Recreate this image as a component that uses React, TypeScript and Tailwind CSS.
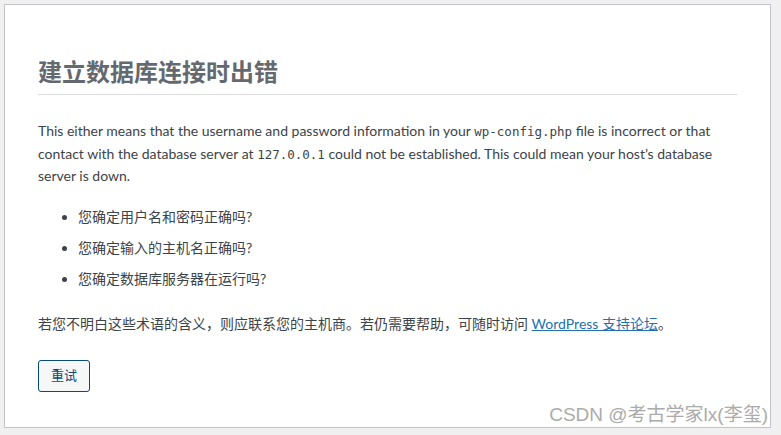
import React from 'react';

const sans = 'Lato, "Noto Sans CJK SC", sans-serif';
const mono = '"DejaVu Sans Mono", "Liberation Mono", monospace';

const checks = ['您确定用户名和密码正确吗?', '您确定输入的主机名正确吗?', '您确定数据库服务器在运行吗?'];

const App = () => {
  return (
    <div
      className="relative h-[435px] w-[781px] overflow-hidden bg-[#f0f0f1] pl-1 pt-1"
      style={{ fontFamily: sans }}
    >
      <div className="h-[424px] w-[767px] border border-[#c3c4c7] bg-white px-[33px] text-[14px] leading-[22.5px] text-[#3c434a]">
        <h1 className="mt-[51px] border-b border-[#dcdcde] pb-[6px] text-[24px] font-bold leading-[32px] text-[#646970]">
          建立数据库连接时出错
        </h1>
        <p className="mt-[25px]">
          This either means that the username and password information in your{' '}
          <code className="text-[12.5px] leading-[0]" style={{ fontFamily: mono }}>
            wp-config.php
          </code>{' '}
          file is incorrect or that contact with the database server at{' '}
          <code className="text-[12.5px] leading-[0]" style={{ fontFamily: mono }}>
            127.0.0.1
          </code>{' '}
          could not be established. This could mean your host’s database server is down.
        </p>
        <ul className="mt-[18px] list-disc pl-10">
          {checks.map(item => (
            <li key={item} className="mb-[8.5px]">
              {item}
            </li>
          ))}
        </ul>
        <p className="mt-[23px]">
          若您不明白这些术语的含义，则应联系您的主机商。若仍需要帮助，可随时访问{' '}
          <a href="#" className="text-[#2271b1] underline">
            WordPress 支持论坛
          </a>
          。
        </p>
        <button className="mt-[24px] h-8 rounded-[3px] border border-[#0a4b78] bg-[#f6f7f7] px-3 text-[13px] text-[#0a4b78]">
          重试
        </button>
      </div>
      <div
        className="absolute bottom-[10px] right-[13px] text-[19px] leading-5 text-[#ababab]"
        style={{ fontFamily: '"Liberation Sans", "Noto Sans CJK SC", sans-serif' }}
      >
        CSDN @考古学家lx(李玺)
      </div>
    </div>
  );
};

export default App;
